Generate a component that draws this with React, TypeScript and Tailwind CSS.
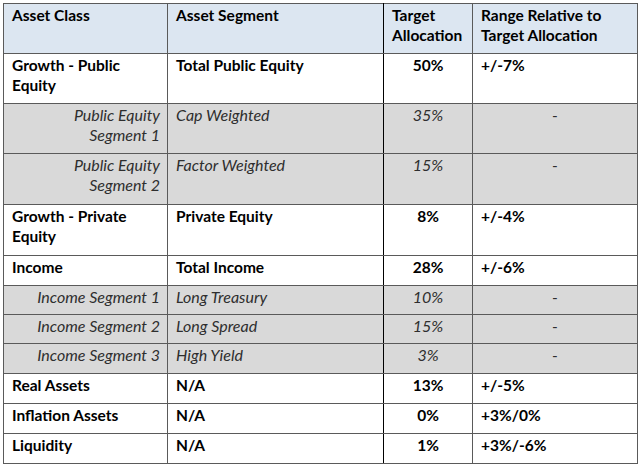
import React from 'react'

type Row = {
  cls: string
  seg: string
  target: string
  range: string
  sub?: boolean
  h: string
}

const rows: Row[] = [
  { cls: 'Growth - Public Equity', seg: 'Total Public Equity', target: '50%', range: '+/-7%', h: 'h-[50px]' },
  { cls: 'Public Equity\nSegment 1', seg: 'Cap Weighted', target: '35%', range: '-', sub: true, h: 'h-[50px]' },
  { cls: 'Public Equity\nSegment 2', seg: 'Factor Weighted', target: '15%', range: '-', sub: true, h: 'h-[51px]' },
  { cls: 'Growth - Private Equity', seg: 'Private Equity', target: '8%', range: '+/-4%', h: 'h-[51px]' },
  { cls: 'Income', seg: 'Total Income', target: '28%', range: '+/-6%', h: 'h-[30px]' },
  { cls: 'Income Segment 1', seg: 'Long Treasury', target: '10%', range: '-', sub: true, h: 'h-[29px]' },
  { cls: 'Income Segment 2', seg: 'Long Spread', target: '15%', range: '-', sub: true, h: 'h-[29px]' },
  { cls: 'Income Segment 3', seg: 'High Yield', target: '3%', range: '-', sub: true, h: 'h-[30px]' },
  { cls: 'Real Assets', seg: 'N/A', target: '13%', range: '+/-5%', h: 'h-[30px]' },
  { cls: 'Inflation Assets', seg: 'N/A', target: '0%', range: '+3%/0%', h: 'h-[30px]' },
  { cls: 'Liquidity', seg: 'N/A', target: '1%', range: '+3%/-6%', h: 'h-[30px]' },
]

export default function App() {
  return (
    <div className="w-[640px] h-[466px] bg-white pt-[3px] pl-[3px] font-['Lato',sans-serif] text-[15.5px] leading-[20px] text-black">
      <table className="w-[634px] table-fixed border-collapse">
        <colgroup>
          <col className="w-[164px]" />
          <col className="w-[216px]" />
          <col className="w-[89px]" />
          <col className="w-[165px]" />
        </colgroup>
        <thead>
          <tr className="h-[50px] bg-[#dce6f1] font-bold">
            <th className="border border-[#5a5a5a] px-[8px] pt-[1px] align-top text-left font-bold">Asset Class</th>
            <th className="border border-[#5a5a5a] border-r-black px-[8px] pt-[1px] align-top text-left font-bold">Asset Segment</th>
            <th className="border border-[#5a5a5a] px-[8px] pt-[1px] align-top text-left font-bold">Target Allocation</th>
            <th className="border border-[#5a5a5a] px-[8px] pt-[1px] align-top text-left font-bold">Range Relative to Target Allocation</th>
          </tr>
        </thead>
        <tbody>
          {rows.map((r) =>
            r.sub ? (
              <tr key={r.cls} className={`${r.h} bg-[#d9d9d9] italic text-[#2e2e2e]`}>
                <td className="border border-[#5a5a5a] pl-[6px] pr-[7px] pt-[1px] align-top text-right whitespace-pre-line text-[16px]">{r.cls}</td>
                <td className="border border-[#5a5a5a] border-r-black px-[8px] pt-[1px] align-top text-[16px]">{r.seg}</td>
                <td className="border border-[#5a5a5a] border-l-black px-[8px] pt-[1px] align-top text-center text-[16px]">{r.target}</td>
                <td className="border border-[#5a5a5a] px-[8px] pt-[1px] align-top text-center not-italic">{r.range}</td>
              </tr>
            ) : (
              <tr key={r.cls} className={`${r.h} bg-white font-bold`}>
                <td className="border border-[#5a5a5a] px-[8px] pt-[1px] align-top">{r.cls}</td>
                <td className="border border-[#5a5a5a] border-r-black px-[8px] pt-[1px] align-top">{r.seg}</td>
                <td className="border border-[#5a5a5a] border-l-black px-[8px] pt-[1px] align-top text-center">{r.target}</td>
                <td className="border border-[#5a5a5a] px-[8px] pt-[1px] align-top">{r.range}</td>
              </tr>
            )
          )}
        </tbody>
      </table>
    </div>
  )
}
